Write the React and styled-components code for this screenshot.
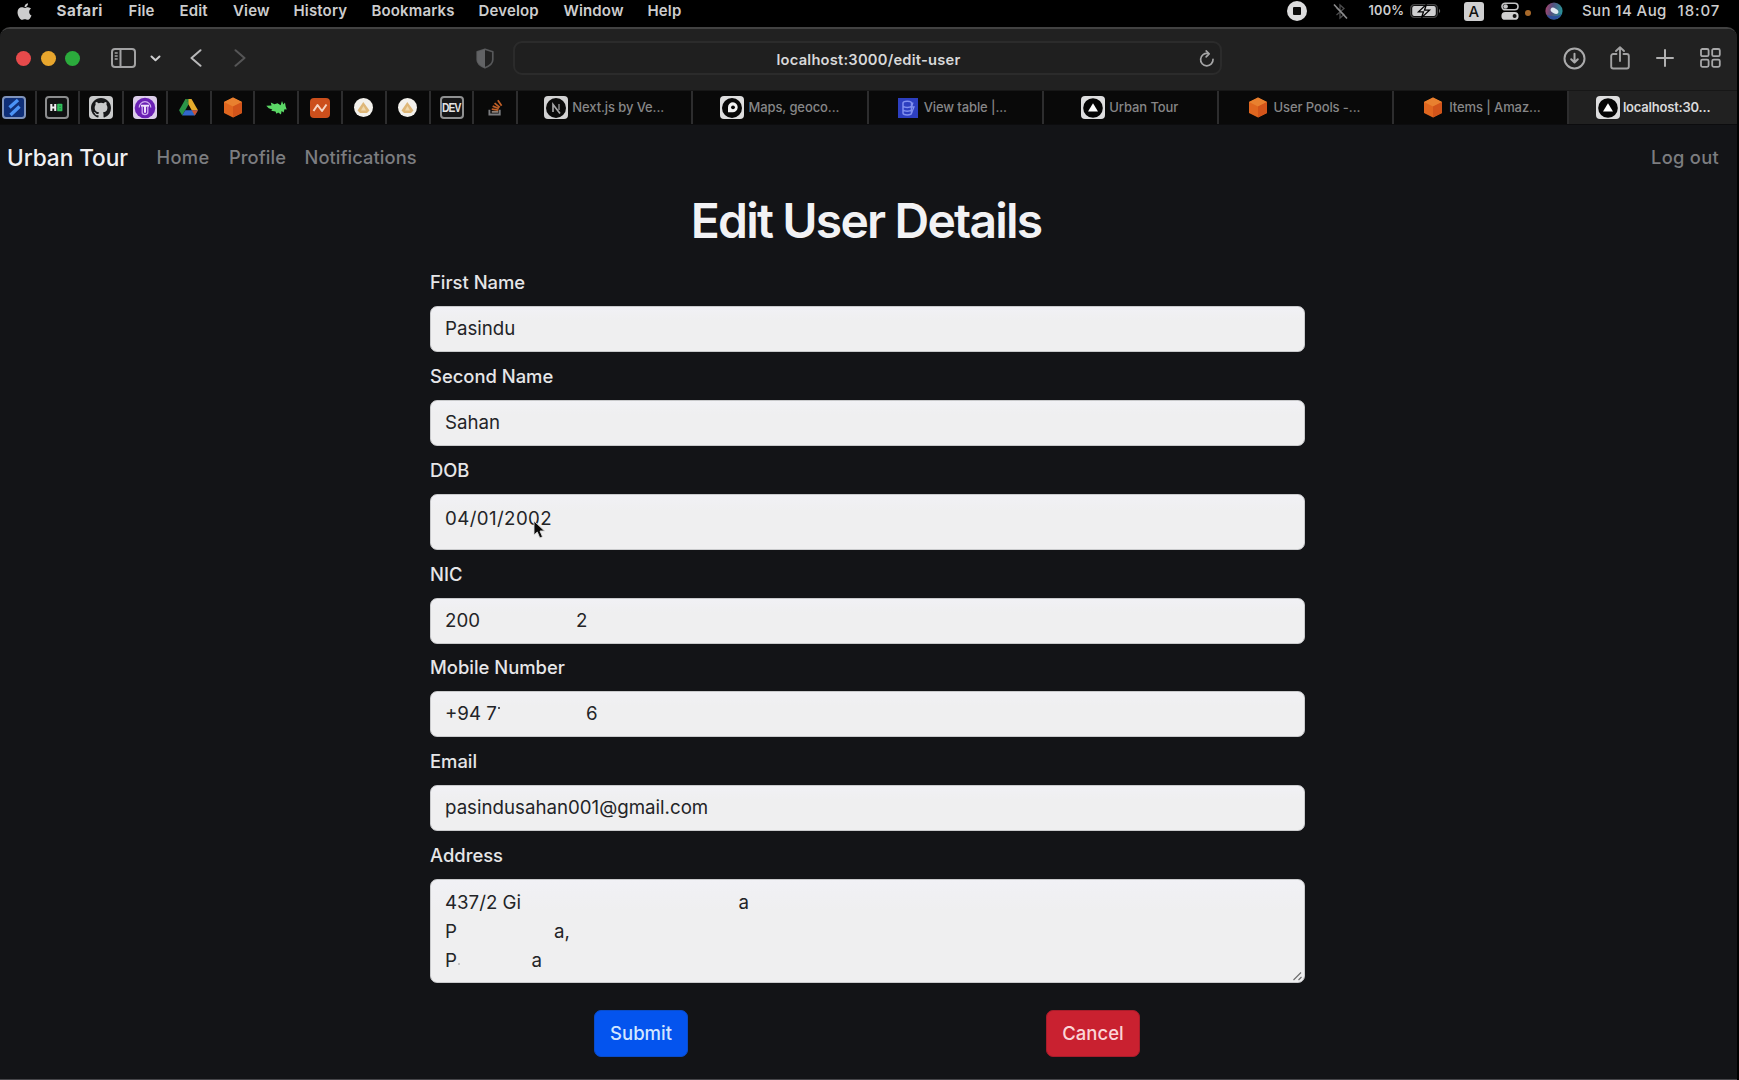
import React from "react";
import styled, { createGlobalStyle } from "styled-components";
import { FaApple } from "react-icons/fa";

const GlobalStyle = createGlobalStyle`
  *, *::before, *::after { box-sizing: border-box; }
  body {
    margin: 0;
    background: #000;
    overflow: hidden;
    font-family: Inter, "Liberation Sans", sans-serif;
  }
`;

/* ---------- menu bar ---------- */

const Screen = styled.div`
  width: 1739px;
  height: 1080px;
  background: #000;
  display: flex;
  flex-direction: column;
`;

const MenuBar = styled.div`
  height: 27px;
  flex: none;
  display: flex;
  justify-content: space-between;
  padding: 0 0 5px 15px;
  color: #cdcdce;
  font-size: 15px;
  font-weight: 600;
  line-height: 22px;
  white-space: pre;
`;

const MenuGroup = styled.div`
  display: flex;
  align-items: center;
`;

const Slot = styled.div`
  width: ${(p) => p.$w}px;
  height: 22px;
  flex: none;
  display: flex;
  align-items: center;
  font-size: ${(p) => p.$size || 15}px;
  font-weight: ${(p) => p.$weight || 600};
  letter-spacing: ${(p) => p.$track || 0}px;
`;

const InputSource = styled.div`
  width: 19.5px;
  height: 19px;
  border-radius: 3px;
  background: #cfcfd0;
  color: #111;
  font-size: 15px;
  font-weight: 500;
  line-height: 19px;
  text-align: center;
`;

const MicDot = styled.div`
  width: 6px;
  height: 6px;
  margin-top: 3px;
  border-radius: 50%;
  background: #a8692a;
`;

/* ---------- browser window ---------- */

const Window = styled.div`
  width: 1737px;
  flex: 1;
  display: flex;
  flex-direction: column;
  border-top: 2px solid #424242;
  border-bottom: 1px solid #46464a;
  border-radius: 10px 10px 0 0;
  background: #131417;
  overflow: hidden;
`;

const Toolbar = styled.div`
  height: 61px;
  flex: none;
  display: flex;
  align-items: center;
  padding: 0 16.5px 3px 16px;
  background: #212121;
  color: #b4b4b5;
  svg { flex: none; display: block; }
`;

const Lights = styled.div`
  display: flex;
  gap: 9.5px;
  margin-right: 30.5px;
`;

const Light = styled.i`
  width: 15px;
  height: 15px;
  border-radius: 50%;
  background: ${(p) => p.$color};
`;

const Space = styled.div`
  width: ${(p) => p.$w}px;
  flex: none;
`;

const AddressBar = styled.div`
  width: 709px;
  height: 34px;
  flex: none;
  display: grid;
  grid-template-columns: 17px 1fr 17px;
  align-items: center;
  padding: 0 4px 0 6px;
  border: 2px solid #2b2b2b;
  border-radius: 9px;
  background: #1f1f1f;
`;

const Url = styled.span`
  grid-column: 2;
  padding-top: 3px;
  text-align: center;
  color: #d8d8d9;
  font-size: 14.7px;
  font-weight: 600;
  letter-spacing: 0.22px;
`;

const Tools = styled.div`
  margin-left: auto;
  display: flex;
  align-items: center;
`;

/* ---------- tabs ---------- */

const TabStrip = styled.div`
  height: 35px;
  flex: none;
  display: flex;
  background: #090909;
  border-top: 1px solid #171717;
  border-bottom: 1px solid #0c0c0e;
  overflow: hidden;
`;

const PinnedTab = styled.div`
  width: ${(p) => p.$w || 43.8}px;
  flex: none;
  display: flex;
  align-items: center;
  justify-content: center;
  padding-right: ${(p) => p.$shift || 0}px;
  border-right: 2px solid #2d2d2e;
`;

const Tab = styled.div`
  width: ${(p) => (p.$active ? 171 : 175.2)}px;
  flex: none;
  display: flex;
  align-items: center;
  gap: ${(p) => (p.$active ? 2.5 : 4)}px;
  padding-left: ${(p) => p.$pad}px;
  border-right: ${(p) => (p.$active ? "0" : "2px solid #2d2d2e")};
  background: ${(p) => (p.$active ? "#212121" : "transparent")};
  color: ${(p) => (p.$active ? "#dadadb" : "#868687")};
  font-size: 13px;
  font-weight: ${(p) => (p.$active ? 600 : 500)};
  letter-spacing: ${(p) => (p.$active ? -0.2 : -0.1)}px;
  white-space: pre;
`;

const TabText = styled.span`
  padding-bottom: 1px;
`;

const IconBox = styled.div`
  width: 24px;
  flex: none;
  display: flex;
  justify-content: center;
`;

const Tile = styled.div`
  width: ${(p) => p.$size || 24}px;
  height: ${(p) => (p.$size ? p.$size : 22.5)}px;
  flex: none;
  display: flex;
  align-items: center;
  justify-content: center;
  border: ${(p) => (p.$edge ? `2px solid ${p.$edge}` : "0")};
  border-radius: ${(p) => (p.$round ? "50%" : "4px")};
  background: ${(p) => p.$bg || "#0b0b0b"};
  color: #e4e4e4;
  overflow: hidden;
`;

const DevMark = styled.span`
  font-family: "Liberation Sans", sans-serif;
  font-size: 12.5px;
  font-weight: 700;
  letter-spacing: -1.1px;
  transform: scaleX(0.82);
  margin: 0 -3px;
`;

/* ---------- page ---------- */

const Navbar = styled.nav`
  height: 64px;
  flex: none;
  display: flex;
  align-items: center;
  padding: 0 18px 0 7px;
  font-size: 18.3px;
  font-weight: 500;
  letter-spacing: 0.1px;
  color: #7c7d80;
`;

const Brand = styled.a`
  width: 149.5px;
  font-size: 22.7px;
  letter-spacing: -0.1px;
  color: #f0f0f2;
`;

const NavLink = styled.a`
  width: ${(p) => p.$w}px;
  letter-spacing: ${(p) => p.$track || 0.08}px;
`;

const LogOut = styled.a`
  margin-left: auto;
  letter-spacing: 0.3px;
`;

const Title = styled.h1`
  margin: 0 0 22.4px;
  height: 58px;
  padding-right: 5px;
  text-align: center;
  color: #f2f2f4;
  font-size: 48px;
  font-weight: 600;
  line-height: 63px;
  letter-spacing: -1.8px;
`;

const Form = styled.form`
  width: 875.5px;
  margin-left: 429.5px;
  display: flex;
  flex-direction: column;
`;

const Field = styled.div`
  display: flex;
  flex-direction: column;
  gap: 10px;
  padding-bottom: 10.9px;
`;

const Label = styled.label`
  height: 27px;
  line-height: 27px;
  padding-left: 0.5px;
  color: #e6e6e8;
  font-size: 18.4px;
  font-weight: 530;
`;

const Control = styled.div`
  height: ${(p) => p.$h || 46}px;
  padding: ${(p) => p.$top || 8}px 14.5px 0;
  position: relative;
  border: 1px solid #c9cacc;
  border-radius: 7px;
  background: linear-gradient(#f1f1f5, #efeff0 30%);
  color: #232427;
  font-size: 18.7px;
  line-height: ${(p) => p.$line || 28}px;
  letter-spacing: ${(p) => p.$track || 0}px;
`;

const Line = styled.div`
  display: flex;
  white-space: pre;
`;

const Chunk = styled.span`
  width: ${(p) => p.$w}px;
  flex: none;
`;

const Speck = styled.i`
  display: inline-block;
  width: 2px;
  height: 2px;
  margin-left: 1px;
  vertical-align: ${(p) => p.$rise}px;
  background: ${(p) => p.$color};
`;

const Resizer = styled.svg`
  position: absolute;
  right: 0;
  bottom: 0;
`;

const Pointer = styled.svg`
  position: absolute;
  left: 102.5px;
  top: 25px;
`;

const Actions = styled.div`
  display: flex;
  padding: 16.5px 0 0 164.5px;
  gap: 358px;
`;

const Button = styled.button`
  width: 94px;
  height: 46.5px;
  padding: 0;
  border: 1px solid ${(p) => p.$edge};
  border-radius: 7px;
  background: ${(p) => p.$bg};
  color: ${(p) => p.$ink};
  font: 500 18.5px Inter, sans-serif;
`;

/* ---------- icons ---------- */

const Cube = () => (
  <svg width="20" height="21" viewBox="0 0 20 21">
    <path d="M10 .5 19 5v11l-9 4.5L1 16V5z" fill="#e0661f" />
    <path d="M10 .5 19 5l-9 4.5L1 5z" fill="#e8802f" />
    <path d="M10 9.5 19 5v11l-9 4.5z" fill="#d2541a" />
  </svg>
);

const Vercel = () => (
  <Tile $bg="#dededf">
    <svg width="22" height="22" viewBox="0 0 22 22">
      <circle cx="11" cy="11" r="9.8" fill="#050505" />
      <path d="M11 6.2 16 14.6H6z" fill="#fff" />
    </svg>
  </Tile>
);

const NextJs = () => (
  <Tile $bg="#d2d2d3">
    <svg width="22" height="22" viewBox="0 0 22 22" fill="none">
      <circle cx="11" cy="11" r="10" fill="#0a0a0a" />
      <path d="M8 15V7.400l7 9" stroke="#a5a5a6" strokeWidth="1.700" />
      <path d="M14 7v6" stroke="#808081" strokeWidth="1.600" />
    </svg>
  </Tile>
);

const Maps = () => (
  <Tile $bg="#dededf">
    <svg width="22" height="22" viewBox="0 0 22 22">
      <circle cx="11" cy="11" r="10" fill="#070707" />
      <path d="M12 5.200a5 5 0 1 1-.6 10H7V10.200a5 5 0 0 1 5-5z" fill="#f2f2f2" />
      <circle cx="12" cy="10.300" r="1.900" fill="#070707" />
    </svg>
  </Tile>
);

const DynamoTable = () => (
  <svg width="20" height="20" viewBox="0 0 20 20" fill="none">
    <rect width="20" height="20" fill="#2d3fc0" />
    <path d="M5 5c0-2.500 8.500-2.500 8.500 0v10c0 2.500-8.500 2.500-8.500 0zM5 8.300c2 1.700 6.500 1.700 8.500 0M5 12c2 1.700 6.500 1.700 8.500 0" stroke="#8190ef" strokeWidth="1.500" />
    <path d="M15 4.500 13.500 9H16l-2.500 6" stroke="#8190ef" strokeWidth="1.300" />
  </svg>
);

const Slashes = () => (
  <Tile $bg="#0f2f78" $edge="#7f93bb">
    <svg width="20" height="19" viewBox="0 0 20 19" fill="none" stroke="#4b93f5" strokeWidth="3.400">
      <path d="M5.500 9.500 14 2M6.500 17 15.500 8.500" />
    </svg>
  </Tile>
);

const HackerEarth = () => (
  <Tile $edge="#8b8c8d" $bg="#101112">
    <svg width="14" height="9" viewBox="0 0 16 10">
      <path d="M1.500 1v8M6 1v8M1.500 5H6" stroke="#eee" strokeWidth="2.400" />
      <rect x="8.200" y=".6" width="6" height="8.800" rx="1" fill="#2fbf5b" />
      <path d="M10.500 3.500h2M10.500 6.500h2" stroke="#187a38" strokeWidth="1" />
    </svg>
  </Tile>
);

const GitHub = () => (
  <Tile $bg="#c9cacb">
    <svg width="20" height="20" viewBox="0 0 16 16">
      <path
        fill="#17181a"
        d="M8 0C3.580 0 0 3.580 0 8c0 3.540 2.290 6.530 5.470 7.590.4.070.55-.17.55-.38v-1.490c-2.010.37-2.530-.49-2.690-.94-.09-.23-.48-.94-.82-1.130-.28-.15-.68-.52-.01-.53.63-.01 1.080.58 1.230.82.72 1.210 1.870.87 2.330.66.07-.52.28-.87.51-1.070-1.780-.2-3.640-.89-3.640-3.950 0-.87.31-1.590.82-2.150-.08-.2-.36-1.020.08-2.120 0 0 .67-.21 2.200.82a7.600 7.600 0 0 1 4 0c1.530-1.040 2.200-.82 2.200-.82.44 1.100.16 1.920.08 2.120.51.56.82 1.270.82 2.150 0 3.070-1.870 3.750-3.650 3.950.29.25.54.73.54 1.480v2.200c0 .21.15.46.55.38A8 8 0 0 0 16 8c0-4.420-3.580-8-8-8z"
      />
    </svg>
  </Tile>
);

const PurpleT = () => (
  <Tile $bg="#dccdea">
    <svg width="22" height="22" viewBox="0 0 22 22" fill="none">
      <circle cx="11" cy="11" r="10.300" fill="#6a20b4" />
      <path d="M5.200 10.500a5.800 5.800 0 0 1 11.600 0M8.200 10v5.500c0 2.800 5.600 2.800 5.600 0V10" stroke="#cfaeee" strokeWidth="1.300" />
      <path d="M7 8.800h8M11 8.800v7" stroke="#f0e2fc" strokeWidth="2" />
    </svg>
  </Tile>
);

const Drive = () => (
  <svg width="19" height="17" viewBox="0 0 20 18">
    <path d="M6.800 0 0 11.800 3.300 17.500 10 5.800z" fill="#2a9448" />
    <path d="M6.800 0h6.400l6.800 11.800h-6.600z" fill="#e5ac2c" />
    <path d="M6.800 0h3.200v5.800z" fill="#24813f" />
    <path d="M6.600 11.800H20l-3.300 5.700H3.300z" fill="#3267cb" />
    <path d="M13.400 11.800H20l-3.300 5.700z" fill="#d0542f" />
  </svg>
);

const Bird = () => (
  <svg width="21" height="16" viewBox="0 0 21 16" fill="#5bd866">
    <path d="M.3 5.800 5.500 5.600 4.800 2.600 8.500 4.300 11.500 3.200 14.600 5.200 16 1l1.300 3.600L19 2.500l.6 3.700 1.100 3.400-2.200-.3-.9 3.200-2-1.600-.6 3.500-2.800-2-1.700 1.400-1-2.200-4.300-.9 1.200-1.300-3.700-1.100z" />
  </svg>
);

const Wave = () => (
  <Tile $size={20} $bg="#cc4f1c">
    <svg width="18" height="14" viewBox="0 0 18 14" fill="none">
      <path d="M2.500 10 6.500 4 11 10l4.500-6.500" stroke="#f6d4c2" strokeWidth="2" strokeLinejoin="round" />
    </svg>
  </Tile>
);

const Plate = () => (
  <Tile $size={19} $round $bg="#f3f1ec">
    <svg width="13" height="11" viewBox="0 0 13 11">
      <path d="M6.300 0 12.500 8.500 10 11H3L.5 8.500z" fill="#deb778" />
      <path d="M6.500 4 9 8.500H4z" fill="#f0d8ab" />
    </svg>
  </Tile>
);

const Dev = () => (
  <Tile $edge="#8f9091" $bg="#151516">
    <DevMark>DEV</DevMark>
  </Tile>
);

const StackOverflow = () => (
  <svg width="15" height="17" viewBox="0 0 16 18" fill="none">
    <path d="M1.500 11.500v5h11v-5" stroke="#7c7d80" strokeWidth="2" />
    <path d="M4 13.600h7" stroke="#8c8078" strokeWidth="1.800" />
    <path d="M4 10.800l7 .9M5 7.600l6.600 2.500M7 4.300l5.500 4.600M10.500 1.200l4 6" stroke="#c05f27" strokeWidth="1.900" />
  </svg>
);

const RecordIcon = () => (
  <svg width="20" height="20" viewBox="0 0 20 20">
    <circle cx="10" cy="10" r="10" fill="#dcdcdd" />
    <rect x="6" y="6" width="8" height="8" rx="1" fill="#0a0a0a" />
  </svg>
);

const BluetoothOff = () => (
  <svg width="15" height="17" viewBox="0 0 15 17" fill="none">
    <path d="M3.500 12 11 5.500 7 2v13l4-3.500L3.500 5" stroke="#4c4c4d" strokeWidth="1.300" />
    <path d="M1 1.500 14 15.500" stroke="#8d8d8e" strokeWidth="1.600" />
  </svg>
);

const Battery = () => (
  <svg width="32" height="14" viewBox="0 0 32 14" fill="none">
    <rect x=".7" y=".7" width="26.600" height="12.600" rx="3.600" stroke="#444" strokeWidth="1.200" />
    <rect x="2.200" y="2" width="23.600" height="10" rx="2" fill="#cfcfd0" />
    <path d="M29 5v4c1.600-.5 1.600-3.500 0-4z" fill="#666" />
    <path d="M16.500.3 8.500 7.800H13.500l-2 5.900 8-7.500h-5z" fill="#d8d8d9" stroke="#000" strokeWidth="1.300" />
  </svg>
);

const ControlCenter = () => (
  <svg width="18" height="18" viewBox="0 0 18 18" fill="none">
    <rect x="1" y="1.200" width="16" height="6.600" rx="3.300" stroke="#c4c4c5" strokeWidth="1.600" />
    <circle cx="4.600" cy="4.500" r="2.300" fill="#c4c4c5" />
    <rect x=".4" y="10" width="17.200" height="7.800" rx="3.900" fill="#cfcfd0" />
    <circle cx="13.600" cy="13.900" r="2" fill="#111" />
  </svg>
);

const Siri = () => (
  <svg width="18" height="18" viewBox="0 0 18 18">
    <defs>
      <linearGradient id="siriHalf" x1="0" y1="0" x2="1" y2="0.200">
        <stop offset="0" stopColor="#b0436a" />
        <stop offset=".45" stopColor="#54507f" />
        <stop offset="1" stopColor="#2c8f96" />
      </linearGradient>
    </defs>
    <circle cx="9" cy="9" r="8.600" fill="url(#siriHalf)" />
    <path d="M1.500 12.500c3 2 11 3 15-1A8.600 8.600 0 0 1 9 17.600c-3.500 0-6.200-2-7.500-5.100z" fill="#2c4f9c" />
    <ellipse cx="9.500" cy="8.800" rx="4.200" ry="2.500" transform="rotate(30 9.500 8.800)" fill="#dfe8f2" />
  </svg>
);

const SidebarIcon = () => (
  <svg width="25" height="20" viewBox="0 0 25 20" fill="none" stroke="#a2a2a3">
    <rect x="1" y="1" width="23" height="18" rx="3" strokeWidth="2" />
    <path d="M9.500 1v18" strokeWidth="2" />
    <path d="M3.700 5h3M3.700 8h3M3.700 11h3" strokeWidth="1.400" />
  </svg>
);

const Chevron = ({ d, w, h, color, stroke = 2 }) => (
  <svg width={w} height={h} viewBox={`0 0 ${w} ${h}`} fill="none">
    <path d={d} stroke={color} strokeWidth={stroke} strokeLinecap="round" strokeLinejoin="round" />
  </svg>
);

const Shield = () => (
  <svg width="18" height="21" viewBox="0 0 18 21" fill="none">
    <path d="M9 1.300 16.800 3.800v8c0 3.800-4 6.500-7.800 8-3.800-1.500-7.800-4.200-7.800-8v-8z" stroke="#57585a" strokeWidth="1.700" strokeLinejoin="round" />
    <path d="M9 1.300v18.500c-3.800-1.500-7.800-4.200-7.800-8v-8z" fill="#626365" />
  </svg>
);

const Reload = () => (
  <svg width="16" height="17" viewBox="0 0 17 18" fill="none" stroke="#a5a5a6" strokeWidth="1.800" strokeLinecap="round" strokeLinejoin="round">
    <path d="M14.900 9.800A6.600 6.600 0 1 1 9.500 3.700" />
    <path d="M7.600 1 10.800 4 7.600 7.200" />
  </svg>
);

const Download = () => (
  <svg width="23" height="23" viewBox="0 0 23 23" fill="none" stroke="#aaaaab" strokeWidth="2" strokeLinecap="round" strokeLinejoin="round">
    <circle cx="11.500" cy="11.500" r="10" />
    <path d="M11.500 6.800v8.500M8.200 12.200l3.300 3.300 3.300-3.300" />
  </svg>
);

const Share = () => (
  <svg width="20" height="24" viewBox="0 0 20 24" fill="none" stroke="#a2a2a3" strokeWidth="1.900" strokeLinecap="round" strokeLinejoin="round">
    <path d="M6.500 8H3.200A2 2 0 0 0 1.200 10v10.500a2 2 0 0 0 2 2h13.600a2 2 0 0 0 2-2V10a2 2 0 0 0-2-2h-3.300" />
    <path d="M10 15V1.500M6 5l4-3.700L14 5" />
  </svg>
);

const Plus = () => (
  <svg width="18" height="18" viewBox="0 0 18 18" stroke="#b0b0b1" strokeWidth="2" strokeLinecap="round">
    <path d="M9 1v16M1 9h16" />
  </svg>
);

const Grid = () => (
  <svg width="21" height="20" viewBox="0 0 21 20" fill="none" stroke="#a8a8a9" strokeWidth="1.800">
    <rect x="1" y="1" width="7.600" height="7.200" rx="1.500" />
    <rect x="12.200" y="1" width="7.600" height="7.200" rx="1.500" />
    <rect x="1" y="11.600" width="7.600" height="7.200" rx="1.500" />
    <rect x="12.200" y="11.600" width="7.600" height="7.200" rx="1.500" />
  </svg>
);

/* ---------- content ---------- */

const menus = [
  ["File", 51],
  ["Edit", 53.5],
  ["View", 60.5],
  ["History", 78],
  ["Bookmarks", 107],
  ["Develop", 85],
  ["Window", 84],
  ["Help", 40],
];

const pinned = [HackerEarth, GitHub, PurpleT, Drive, Cube, Bird, Wave, Plate, Plate, Dev, StackOverflow];

const tabs = [
  { icon: NextJs, text: "Next.js by Ve...", pad: 26 },
  { icon: Maps, text: "Maps, geoco...", pad: 27 },
  { icon: DynamoTable, text: "View table |...", pad: 27 },
  { icon: Vercel, text: "Urban Tour", pad: 37.5 },
  { icon: Cube, text: "User Pools -...", pad: 26.5 },
  { icon: Cube, text: "Items | Amaz...", pad: 27 },
  { icon: Vercel, text: "localhost:30...", pad: 27, active: true },
];

const fields = [
  { label: "First Name", lines: [[["Pasindu"]]] },
  { label: "Second Name", lines: [[["Sahan"]]] },
  { label: "DOB", lines: [[["04/01/2002"]]], h: 55.5, top: 10, track: 0.4, pointer: true },
  { label: "NIC", lines: [[["200", 131], ["2"]]] },
  { label: "Mobile Number", lines: [[["+94 7", 141, { $rise: 11.5, $color: "#55565a" }], ["6"]]] },
  { label: "Email", lines: [[["pasindusahan001@gmail.com"]]] },
  {
    label: "Address",
    lines: [
      [["437/2 Gi", 293.500], ["a"]],
      [["P", 109], ["a,"]],
      [["P", 86.500, { $rise: 1.500, $color: "#c4c4c6" }], ["a"]],
    ],
    h: 103.500,
    top: 8.500,
    line: 28.900,
    resize: true,
  },
];

export default function App() {
  return (
    <Screen>
      <GlobalStyle />
      <MenuBar>
        <MenuGroup>
          <Slot $w={41.5}>
            <FaApple size={19} />
          </Slot>
          <Slot $w={72} $weight={700} $size={15.2} $track={0.45}>Safari</Slot>
          {menus.map(([text, w]) => (
            <Slot key={text} $w={w} $track={0.15}>{text}</Slot>
          ))}
        </MenuGroup>
        <MenuGroup>
          <Slot $w={46}><RecordIcon /></Slot>
          <Slot $w={35.5}><BluetoothOff /></Slot>
          <Slot $w={41.5} $size={12.7} $track={0.25}>100%</Slot>
          <Slot $w={54}><Battery /></Slot>
          <Slot $w={37}><InputSource>A</InputSource></Slot>
          <Slot $w={24}><ControlCenter /></Slot>
          <Slot $w={20}><MicDot /></Slot>
          <Slot $w={37}><Siri /></Slot>
          <Slot $w={95.5} $weight={550} $track={0.4}>Sun 14 Aug</Slot>
          <Slot $w={61.5} $weight={550} $track={0.9}>18:07</Slot>
        </MenuGroup>
      </MenuBar>

      <Window>
        <Toolbar>
          <Lights>
            <Light $color="#e64a4b" />
            <Light $color="#e8a62d" />
            <Light $color="#2bab3c" />
          </Lights>
          <SidebarIcon />
          <Space $w={14} />
          <Chevron w={11} h={7} d="M1.500 1.500 5.500 5.200 9.500 1.500" color="#cfcfd0" />
          <Space $w={29.5} />
          <Chevron w={12} h={18} d="M10.500 1.200 1.500 9l9 7.800" color="#b8b8b9" />
          <Space $w={32} />
          <Chevron w={12} h={18} d="M1.500 1.200 10.500 9l-9 7.800" color="#555556" />
          <Space $w={229.5} />
          <Shield />
          <Space $w={19.5} />
          <AddressBar>
            <Url>localhost:3000/edit-user</Url>
            <Reload />
          </AddressBar>
          <Tools>
            <Download />
            <Space $w={24} />
            <Share />
            <Space $w={25.5} />
            <Plus />
            <Space $w={26} />
            <Grid />
          </Tools>
        </Toolbar>

        <TabStrip>
          <PinnedTab $w={36.5} $shift={6.5}><Slashes /></PinnedTab>
          {pinned.map((Icon, i) => (
            <PinnedTab key={i}><Icon /></PinnedTab>
          ))}
          {tabs.map(({ icon: Icon, text, pad, active }) => (
            <Tab key={text} $pad={pad} $active={active}>
              <IconBox><Icon /></IconBox>
              <TabText>{text}</TabText>
            </Tab>
          ))}
        </TabStrip>

        <Navbar>
          <Brand>Urban Tour</Brand>
          <NavLink $w={72.5} $track={0.35}>Home</NavLink>
          <NavLink $w={75.5}>Profile</NavLink>
          <NavLink>Notifications</NavLink>
          <LogOut>Log out</LogOut>
        </Navbar>

        <Title>Edit User Details</Title>

        <Form onSubmit={(e) => e.preventDefault()}>
          {fields.map(({ label, lines, h, top, line, track, pointer, resize }) => (
            <Field key={label}>
              <Label>{label}</Label>
              <Control $h={h} $top={top} $line={line} $track={track}>
                {lines.map((chunks, i) => (
                  <Line key={i}>
                    {chunks.map(([text, w, speck], k) => (
                      <Chunk key={k} $w={w}>
                        {text}
                        {speck && <Speck {...speck} />}
                      </Chunk>
                    ))}
                  </Line>
                ))}
                {pointer && (
                  <Pointer width="14" height="20" viewBox="0 0 14 20">
                    <path d="M1 1v14l3.300-3 2.500 6 2.700-1.200L7 11h4.600z" fill="#0a0a0a" stroke="#dcdcdc" strokeWidth=".9" />
                  </Pointer>
                )}
                {resize && (
                  <Resizer width="12" height="12" viewBox="0 0 12 12" stroke="#6f6f70" strokeWidth="1.200">
                    <path d="M1.500 10 9 2.500M6.500 10 9.500 7" />
                  </Resizer>
                )}
              </Control>
            </Field>
          ))}
          <Actions>
            <Button type="submit" $bg="#0454ee" $edge="#0a4cc9" $ink="#d3e6ff">Submit</Button>
            <Button type="button" $bg="#c92130" $edge="#a81c2a" $ink="#fbd5d8">Cancel</Button>
          </Actions>
        </Form>
      </Window>
    </Screen>
  );
}
